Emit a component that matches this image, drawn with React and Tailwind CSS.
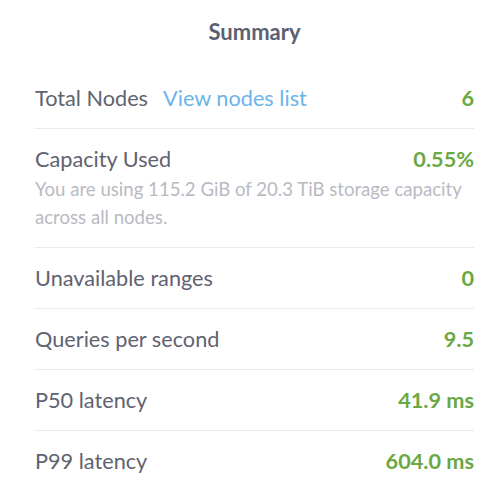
export default function App() {
    const rows = [
        { label: 'Unavailable ranges', value: '0' },
        { label: 'Queries per second', value: '9.5' },
        { label: 'P50 latency', value: '41.9 ms' },
        { label: 'P99 latency', value: '604.0 ms' },
    ]

    return (
        <main className="min-h-screen bg-white font-['Lato','Liberation_Sans',sans-serif] pl-[35px] pr-[29px]">
            {/* header */}
            <div className="h-[69px] flex justify-center pt-[17px]">
                <h2 className="text-[22px] leading-[30px] font-bold text-[#5b6172]">Summary</h2>
            </div>

            {/* total nodes */}
            <div className="h-[60px] flex items-center justify-between border-b border-[#e8e9ec]">
                <div className="flex items-center gap-[15px]">
                    <span className="text-[21.7px] text-[#5f6270]">Total Nodes</span>
                    <a href="#" className="text-[21.7px] text-[#6cb4ea]">View nodes list</a>
                </div>
                <span className="text-[21.7px] font-bold text-[#6aa843]">6</span>
            </div>

            {/* capacity */}
            <div className="py-[16px] border-b border-[#e8e9ec]">
                <div className="flex items-center justify-between h-[28px]">
                    <span className="text-[21.7px] text-[#5f6270]">Capacity Used</span>
                    <span className="text-[21.7px] font-bold text-[#6aa843]">0.55%</span>
                </div>
                <p className="text-[18.6px] leading-[28px] text-[#b8bac2] mt-[2px]">
                    You are using 115.2 GiB of 20.3 TiB storage capacity across all nodes.
                </p>
            </div>

            {rows.map((row, i) => (
                <div
                    key={row.label}
                    className={`h-[61px] flex items-center justify-between ${i < rows.length - 1 ? 'border-b border-[#e8e9ec]' : ''}`}
                >
                    <span className="text-[21.7px] text-[#5f6270]">{row.label}</span>
                    <span className="text-[21.7px] font-bold text-[#6aa843]">{row.value}</span>
                </div>
            ))}
        </main>
    )
}
